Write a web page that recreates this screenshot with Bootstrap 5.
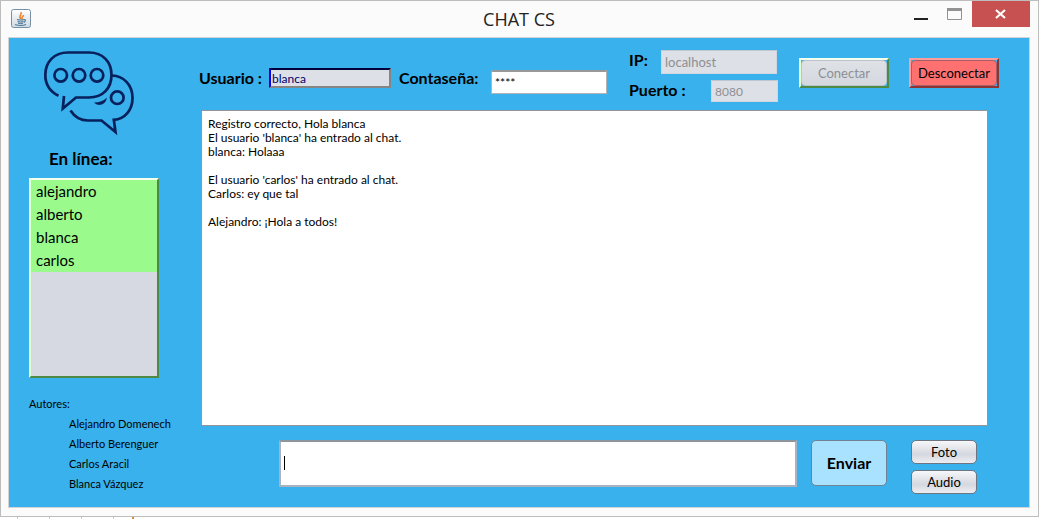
<!DOCTYPE html>
<html lang="es">
<head>
<meta charset="utf-8">
<meta name="viewport" content="width=device-width, initial-scale=1">
<title>CHAT CS</title>
<link href="https://cdn.jsdelivr.net/npm/bootstrap@5.3.0/dist/css/bootstrap.min.css" rel="stylesheet">
<script defer src="https://cdn.jsdelivr.net/npm/bootstrap@5.3.0/dist/js/bootstrap.bundle.min.js"></script>
<style>
  body { font-family: Lato, "Open Sans", sans-serif; color: #000; background: #fff; font-size: 12px; line-height: 14px; }
  .app-window { flex: 1; margin-right: 1px; background: #fbfbfb; border: 1px solid #bdbdbd; padding: 0 8px 8px 7px; }
  .title-bar { display: grid; grid-template-columns: 120px 1fr 120px; height: 36px; }
  .title-bar h1 { font: 18px/36px "Open Sans", sans-serif; color: #222; margin: 0; text-align: center; }
  .java-icon { width: 20px; height: 20px; margin: 8px 0 0 3px; }
  .win-btn { border: 0; background: transparent; padding: 0; height: 26px; width: 33px; }
  .win-btn svg { display: block; margin: 0 auto; }
  .win-close { width: 58px; background: #c75050; }
  .client { background: #38b1ec; border: 1px solid #d3d3d3; }
  .side { width: 192px; padding-left: 20px; }
  .logo { width: 98px; height: 90px; margin: 10px 0 0 11px; }
  .side h2 { font-size: 17px; line-height: 20px; font-weight: 700; margin: 11px 0 9px 20px; }
  .users { width: 130px; height: 200px; background: #d6d9e1; border: 2px solid; border-color: #f4fff0 #4d8a45 #4d8a45 #e4ffd0; border-radius: 0; }
  .users .list-group-item { background: #9afb8c; color: #000; border: 0; border-radius: 0; padding: 0 5px; font-size: 15px; line-height: 23px; }
  .authors { margin-top: 16px; font-size: 11px; line-height: 20px; }
  .authors li { padding-left: 40px; }
  .top-form { height: 72px; margin: 0 30px 0 -2px; }
  .top-form label { font-size: 16px; line-height: 20px; font-weight: 700; white-space: nowrap; }
  .field { border-radius: 0; padding: 0 3px; min-height: 0; font-size: 12px; line-height: 16px; color: #000; }
  .f-user { width: 122px; height: 20px; background: #dde0e6; color: #00006a; border: 2px solid; border-color: #00003a #858585 #858585 #0000e0; padding-left: 1px; }
  .f-pass { width: 116px; height: 24px; background: #fff; border: 1px solid #b4b4b4; border-top: 2px solid #999; }
  .f-off, .f-off:disabled { background: #dde0e6; color: #8e8f92; border: 1px solid #d2d6de; border-top-color: #bfc8d2; opacity: 1; }
  .f-host { width: 116px; height: 24px; font-size: 13px; }
  .f-port { width: 67px; height: 22px; }
  .server { width: 148px; margin-left: 22px; padding-top: 12px; gap: 6px; }
  .server .f-port { margin-right: -1px; }
  .l-user { width: 70px; }
  .l-pass { width: 92px; }
  .session { gap: 20px; padding-top: 20px; }
  .edge, .edge:hover, .edge:disabled { width: 90px; height: 30px; border: 2px solid; border-radius: 0; padding: 0; background: #38b1ec; opacity: 1; }
  .edge span { display: block; height: 26px; line-height: 24px; border: 1px solid; border-radius: 4px; font-size: 13px; }
  .edge-green, .edge-green:disabled { border-color: #f4fff0 #4d8a45 #4d8a45 #e4ffd0; color: #8e8f92; }
  .edge-green span { background: linear-gradient(#dfe1e6, #d4d8df); border-color: #bcc2ca; }
  .edge-red, .edge-red:hover { border-color: #ff9c9c #8d3434 #8d3434 #ff9c9c; color: #000; }
  .edge-red span { background: #ff7070; border-color: #a85e66; }
  .chat-log { background: #fff; border: 1px solid #92969c; margin-right: 41px; padding: 6px; white-space: pre-line; min-height: 200px; }
  .composer { padding: 14px 52px 13px 78px; }
  .composer textarea { height: 47px; resize: none; padding: 14px 3px; border: 2px solid #a9b3bf; border-top-color: #8d949c; border-radius: 0; font-size: 14px; line-height: 16px; caret-color: transparent; }
  .caret { left: 5px; top: 16px; width: 1px; height: 14px; background: #000; }
  .composer textarea:not(:placeholder-shown) + .caret { display: none; }
  .send { width: 76px; height: 46px; margin: 0 24px 0 14px; padding: 0; border: 1px solid #6e8292; border-radius: 5px; background: #a9e2ff; font-size: 16px; font-weight: 700; color: #000; }
  .attachments { gap: 6px; }
  .attach { width: 66px; height: 24px; padding: 0; border: 1px solid #6d7580; border-radius: 5px; background: linear-gradient(#f6f7f9, #d5d8df 60%, #eceef2); font-size: 13px; line-height: 22px; color: #000; }
  .ruler { height: 2px; background: linear-gradient(90deg, transparent 132px, #d98a3c 132px 134px, transparent 134px), repeating-linear-gradient(90deg, #fff 0 17px, #ccc 17px 18px, #fff 18px 32px); background-size: 134px 2px; background-repeat: no-repeat; }
</style>
</head>
<body class="d-flex flex-column min-vh-100">
<div class="app-window d-flex flex-column">
  <header class="title-bar">
    <svg class="java-icon" viewBox="0 0 20 20" aria-hidden="true">
      <defs><linearGradient id="jg" x2="0" y2="1"><stop stop-color="#fff"/><stop offset="1" stop-color="#cfd9e3"/></linearGradient></defs>
      <rect x=".5" y=".5" width="19" height="18" rx="2" fill="url(#jg)" stroke="#7790a6"/>
      <path d="M10 10C6.500 7 11.500 6 10 3M11.500 10c-2-2 1-2 1-4" fill="none" stroke="#f08024" stroke-width="1.500"/>
      <path d="M6 10.500q4 1 7 0M6.500 12.500q3 1 6 0M7 14.300q3 .8 5 0M13 10.500q3 0 0 3M4 15.500q6 2 11 0" fill="none" stroke="#527c9c" stroke-width="1.100"/>
    </svg>
    <h1>CHAT CS</h1>
    <div class="d-flex justify-content-end">
      <button class="win-btn" type="button" aria-label="Minimizar"><svg width="33" height="26"><path d="M8 18h14" stroke="#222" stroke-width="2"/></svg></button>
      <button class="win-btn" type="button" aria-label="Maximizar"><svg width="33" height="26"><path d="M8.500 8v10.500h14V8" fill="none" stroke="#929292"/><path d="M8 8.500h15" stroke="#929292" stroke-width="3"/></svg></button>
      <button class="win-btn win-close" type="button" aria-label="Cerrar"><svg width="58" height="26"><path d="M24 9l9 8M33 9l-9 8" stroke="#fff" stroke-width="2.200"/></svg></button>
    </div>
  </header>

  <main class="client d-flex flex-grow-1">
    <aside class="side flex-shrink-0">
      <svg class="logo d-block" viewBox="40 48 98 90" aria-hidden="true" fill="none" stroke="#08205c" stroke-width="2.700">
        <path d="M58.500 95.800C50 91.500 45.300 84 45.300 75C45.300 62 54 52.500 68 52.500H89C103 52.500 111.500 62 111.500 75C111.500 88 103 97.500 89 97.500H76L62.800 108.500L64 96"/>
        <path d="M112 75.500C124 76 132.500 85 132.500 98C132.500 110 125 119 113.800 119.800L115.500 132L101.500 120.500H88C80 120.500 74 116 70.500 110.500"/>
        <circle cx="60.700" cy="75.300" r="6.300"/><circle cx="79" cy="75.300" r="6.300"/><circle cx="97" cy="75.300" r="6.300"/><circle cx="117.300" cy="97.700" r="6.300"/>
        <path d="M94 102.500Q102 102.500 107 97.500Q105.500 105 99 105Q96 104.800 94 102.500Z" fill="#08205c" stroke="none"/>
      </svg>
      <h2>En línea:</h2>
      <ul class="users list-group">
        <li class="list-group-item">alejandro</li>
        <li class="list-group-item">alberto</li>
        <li class="list-group-item">blanca</li>
        <li class="list-group-item">carlos</li>
      </ul>
      <div class="authors">Autores:
        <ul class="list-unstyled mb-0">
          <li>Alejandro Domenech</li>
          <li>Alberto Berenguer</li>
          <li>Carlos Aracil</li>
          <li>Blanca Vázquez</li>
        </ul>
      </div>
    </aside>

    <div class="d-flex flex-column flex-grow-1">
      <form class="top-form d-flex">
        <div class="d-flex align-items-center pt-2">
          <label class="l-user" for="user">Usuario :</label>
          <input class="form-control field f-user" id="user" value="blanca" readonly>
          <label class="l-pass ms-2" for="pass">Contaseña:</label>
          <input class="form-control field f-pass mt-2" id="pass" type="text" value="****">
        </div>
        <div class="server d-flex flex-column">
          <div class="d-flex justify-content-between"><label for="host">IP:</label><input class="form-control field f-off f-host" id="host" value="localhost" disabled></div>
          <div class="d-flex justify-content-between"><label for="port">Puerto :</label><input class="form-control field f-off f-port" id="port" value="8080" disabled></div>
        </div>
        <div class="session d-flex ms-auto">
          <button class="btn edge edge-green" type="button" disabled><span>Conectar</span></button>
          <button class="btn edge edge-red" type="button"><span>Desconectar</span></button>
        </div>
      </form>

      <div class="chat-log flex-grow-1" role="log">Registro correcto, Hola blanca
El usuario 'blanca' ha entrado al chat.
blanca: Holaaa

El usuario 'carlos' ha entrado al chat.
Carlos: ey que tal

Alejandro: ¡Hola a todos!</div>

      <form class="composer d-flex">
        <div class="position-relative flex-grow-1">
          <textarea class="form-control" aria-label="Mensaje" placeholder=" "></textarea>
          <span class="caret position-absolute"></span>
        </div>
        <button class="btn send flex-shrink-0" type="button">Enviar</button>
        <div class="attachments d-flex flex-column">
          <button class="btn attach" type="button">Foto</button>
          <button class="btn attach" type="button">Audio</button>
        </div>
      </form>
    </div>
  </main>
</div>
<div class="ruler"></div>
</body>
</html>
